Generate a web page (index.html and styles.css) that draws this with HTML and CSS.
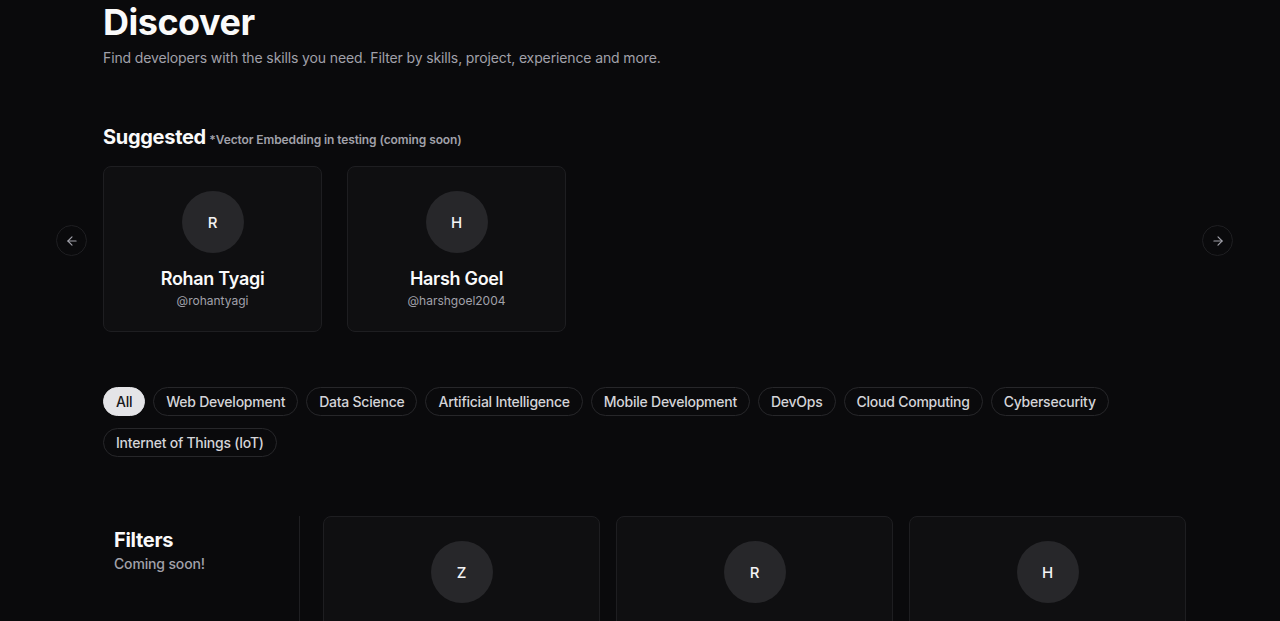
FILE: index.html
```html
<!DOCTYPE html>
<html>
<head>
<meta charset="utf-8">
<link rel="stylesheet" href="styles.css">
</head>
<body>
<main class="page">
  <header class="intro">
    <h1 class="title">Discover</h1>
    <p class="subtitle">Find developers with the skills you need. Filter by skills, project, experience and more.</p>
  </header>

  <section class="suggested">
    <h2 class="sec-title">Suggested <span class="note">*Vector Embedding in testing (coming soon)</span></h2>
    <div class="carousel">
      <button class="nav nav-prev" aria-label="Previous">
        <svg viewBox="0 0 24 24" width="14" height="14" fill="none" stroke="currentColor" stroke-width="2" stroke-linecap="round" stroke-linejoin="round"><path d="M19 12H5"/><path d="M12 19l-7-7 7-7"/></svg>
      </button>
      <div class="track">
        <div class="card sug-card">
          <div class="avatar">R</div>
          <div class="name">Rohan Tyagi</div>
          <div class="handle">@rohantyagi</div>
        </div>
        <div class="card sug-card">
          <div class="avatar">H</div>
          <div class="name">Harsh Goel</div>
          <div class="handle">@harshgoel2004</div>
        </div>
      </div>
      <button class="nav nav-next" aria-label="Next">
        <svg viewBox="0 0 24 24" width="14" height="14" fill="none" stroke="currentColor" stroke-width="2" stroke-linecap="round" stroke-linejoin="round"><path d="M5 12h14"/><path d="M12 5l7 7-7 7"/></svg>
      </button>
    </div>
  </section>

  <nav class="chips">
    <span class="chip active">All</span>
    <span class="chip">Web Development</span>
    <span class="chip">Data Science</span>
    <span class="chip">Artificial Intelligence</span>
    <span class="chip">Mobile Development</span>
    <span class="chip">DevOps</span>
    <span class="chip">Cloud Computing</span>
    <span class="chip">Cybersecurity</span>
    <span class="chip">Internet of Things (IoT)</span>
  </nav>

  <section class="browse">
    <aside class="filters">
      <h3 class="filters-title">Filters</h3>
      <p class="filters-note">Coming soon!</p>
    </aside>
    <div class="grid">
      <div class="card dev-card">
        <div class="avatar">Z</div>
        <div class="name">Zara Khan</div>
        <div class="handle">@zarakhan</div>
      </div>
      <div class="card dev-card">
        <div class="avatar">R</div>
        <div class="name">Rohan Tyagi</div>
        <div class="handle">@rohantyagi</div>
      </div>
      <div class="card dev-card">
        <div class="avatar">H</div>
        <div class="name">Harsh Goel</div>
        <div class="handle">@harshgoel2004</div>
      </div>
    </div>
  </section>
</main>
</body>
</html>
```

FILE: styles.css
```css
* { box-sizing: border-box; }
html, body {
  margin: 0;
  background: #0a0a0c;
  color: #fafafa;
  font-family: Inter, "Noto Sans", sans-serif;
}
.page {
  width: 1083px;
  margin-left: 103px;
  padding-top: 2px;
}
.title {
  margin: 0;
  font-size: 36px;
  line-height: 40px;
  font-weight: 700;
  letter-spacing: -0.5px;
  color: #fafafa;
}
.subtitle {
  margin: 6px 0 0;
  font-size: 14px;
  line-height: 20px;
  letter-spacing: -0.12px;
  color: #a1a1aa;
}
.suggested { margin-top: 55px; }
.sec-title {
  margin: 0;
  font-size: 20px;
  line-height: 28px;
  font-weight: 700;
  letter-spacing: -0.3px;
  color: #fafafa;
}
.note {
  font-size: 12px;
  font-weight: 600;
  letter-spacing: -0.1px;
  margin-left: -1px;
  color: #a1a1aa;
}
.carousel {
  position: relative;
  margin-top: 12px;
}
.track {
  display: flex;
  gap: 25px;
}
.card {
  background: #0f0f11;
  border: 1px solid #1e1e21;
  border-radius: 8px;
  display: flex;
  flex-direction: column;
  align-items: center;
}
.sug-card {
  width: 219px;
  height: 166px;
  padding-top: 24px;
}
.avatar {
  width: 62px;
  height: 62px;
  border-radius: 50%;
  background: #27272a;
  display: flex;
  align-items: center;
  justify-content: center;
  font-size: 15px;
  font-weight: 500;
  color: #f4f4f5;
}
.name {
  margin-top: 14px;
  font-size: 18px;
  line-height: 24px;
  font-weight: 600;
  letter-spacing: -0.3px;
  color: #fafafa;
}
.handle {
  margin-top: 2px;
  font-size: 12px;
  line-height: 16px;
  color: #a1a1aa;
}
.nav {
  position: absolute;
  top: 59px;
  width: 31px;
  height: 31px;
  border-radius: 50%;
  border: 1px solid #1f1f22;
  background: #0a0a0c;
  color: #a1a1aa;
  display: flex;
  align-items: center;
  justify-content: center;
  padding: 0;
}
.nav-prev { left: -47px; }
.nav-next { left: 1099px; }
.chips {
  margin-top: 55px;
  display: flex;
  flex-wrap: wrap;
  gap: 12px 8px;
}
.chip {
  height: 29px;
  padding: 0 12px;
  border: 1px solid #27272a;
  border-radius: 999px;
  font-size: 14px;
  font-weight: 500;
  line-height: 27px;
  letter-spacing: -0.24px;
  color: #d4d4d8;
}
.chip.active {
  background: #e4e4e7;
  border-color: #e4e4e7;
  color: #18181b;
}
.browse {
  margin-top: 59px;
  display: flex;
}
.filters {
  width: 197px;
  flex: none;
  border-right: 1px solid #1f1f22;
  padding: 12px 11px 0;
  min-height: 140px;
}
.filters-title {
  margin: 0;
  font-size: 20px;
  line-height: 24px;
  font-weight: 700;
  letter-spacing: -0.3px;
  color: #fafafa;
}
.filters-note {
  margin: 2px 0 0;
  font-size: 14px;
  line-height: 20px;
  letter-spacing: -0.15px;
  color: #a1a1aa;
  font-weight: 500;
}
.grid {
  flex: 1;
  margin-left: 23px;
  display: grid;
  grid-template-columns: repeat(3, 1fr);
  gap: 16px;
}
.dev-card {
  height: 180px;
  padding-top: 24px;
}
```
